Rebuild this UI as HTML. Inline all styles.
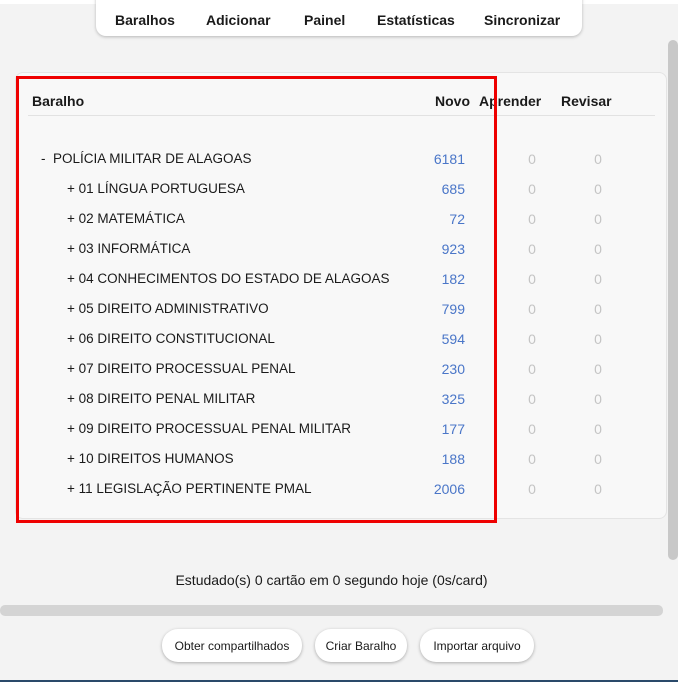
<!DOCTYPE html>
<html><head><meta charset="utf-8"><style>
*{margin:0;padding:0;box-sizing:border-box}
body{width:678px;height:682px;background:#f3f3f3;font-family:"Liberation Sans",sans-serif;color:#1a1a1a;position:relative;overflow:hidden}
.nav{position:absolute;left:96px;top:-6px;width:486px;height:42px;background:#fff;border-radius:0 0 10px 10px;box-shadow:0 1px 3px rgba(0,0,0,.25)}
.nav span{position:absolute;top:18px;font-weight:bold;font-size:14px}
.card{position:absolute;left:15px;top:72px;width:652px;height:447px;background:#f8f8f8;border:1px solid #e4e4e4;border-radius:8px}
.red{position:absolute;left:16px;top:76px;width:481px;height:447px;border:3px solid #e00;}
.t{position:absolute;font-size:14px;white-space:nowrap}
.h{font-weight:bold}
.n{color:#4a76c8;text-align:right;width:60px}
.z{color:#c4c4c4;width:20px;text-align:center}
.line{position:absolute;left:28px;top:115px;width:627px;height:1px;background:#e2e2e2}
.vs{position:absolute;left:668px;top:40px;width:10px;height:520px;background:#c8c8c8;border-radius:5px}
.hs{position:absolute;left:0;top:605px;width:663px;height:11px;background:#d4d4d4;border-radius:5px}
.btn{position:absolute;top:629px;height:33px;background:#fff;border-radius:16px;box-shadow:0 1px 3px rgba(0,0,0,.3);font-size:12px;line-height:35px;text-align:center}
</style></head><body>
<div style="position:absolute;left:0;top:0;width:678px;height:4px;background:#fff"></div>
<div class="nav">
<span style="left:19px">Baralhos</span><span style="left:110px">Adicionar</span><span style="left:208px">Painel</span><span style="left:281px">Estatísticas</span><span style="left:388px">Sincronizar</span>
</div>
<div class="vs"></div>
<div class="card"></div>
<div class="line"></div>
<div class="t h" style="left:32px;top:93px">Baralho</div>
<div class="t h" style="left:435px;top:93px">Novo</div>
<div class="t h" style="left:479px;top:93px">Aprender</div>
<div class="t h" style="left:561px;top:93px">Revisar</div>
<div id="rows"></div>
<div class="red"></div>
<div class="t" style="left:0;width:663px;text-align:center;top:572px">Estudado(s) 0 cartão em 0 segundo hoje (0s/card)</div>
<div class="hs"></div>
<div class="btn" style="left:162px;width:140px">Obter compartilhados</div>
<div class="btn" style="left:315px;width:92px">Criar Baralho</div>
<div class="btn" style="left:420px;width:114px">Importar arquivo</div>
<div style="position:absolute;left:0;top:680px;width:678px;height:2px;background:#2a4a6a"></div>
<script>
var d=[["-&nbsp; POLÍCIA MILITAR DE ALAGOAS",6181,41],["+ 01 LÍNGUA PORTUGUESA",685,67],["+ 02 MATEMÁTICA",72,67],["+ 03 INFORMÁTICA",923,67],["+ 04 CONHECIMENTOS DO ESTADO DE ALAGOAS",182,67],["+ 05 DIREITO ADMINISTRATIVO",799,67],["+ 06 DIREITO CONSTITUCIONAL",594,67],["+ 07 DIREITO PROCESSUAL PENAL",230,67],["+ 08 DIREITO PENAL MILITAR",325,67],["+ 09 DIREITO PROCESSUAL PENAL MILITAR",177,67],["+ 10 DIREITOS HUMANOS",188,67],["+ 11 LEGISLAÇÃO PERTINENTE PMAL",2006,67]];
var h="";d.forEach(function(r,i){var y=151+i*30;
h+='<div class="t" style="left:'+r[2]+'px;top:'+y+'px;font-size:13.5px">'+r[0]+'</div><div class="t n" style="left:405px;top:'+y+'px">'+r[1]+'</div><div class="t z" style="left:522px;top:'+y+'px">0</div><div class="t z" style="left:588px;top:'+y+'px">0</div>';});
document.getElementById("rows").innerHTML=h;
</script>
</body></html>
